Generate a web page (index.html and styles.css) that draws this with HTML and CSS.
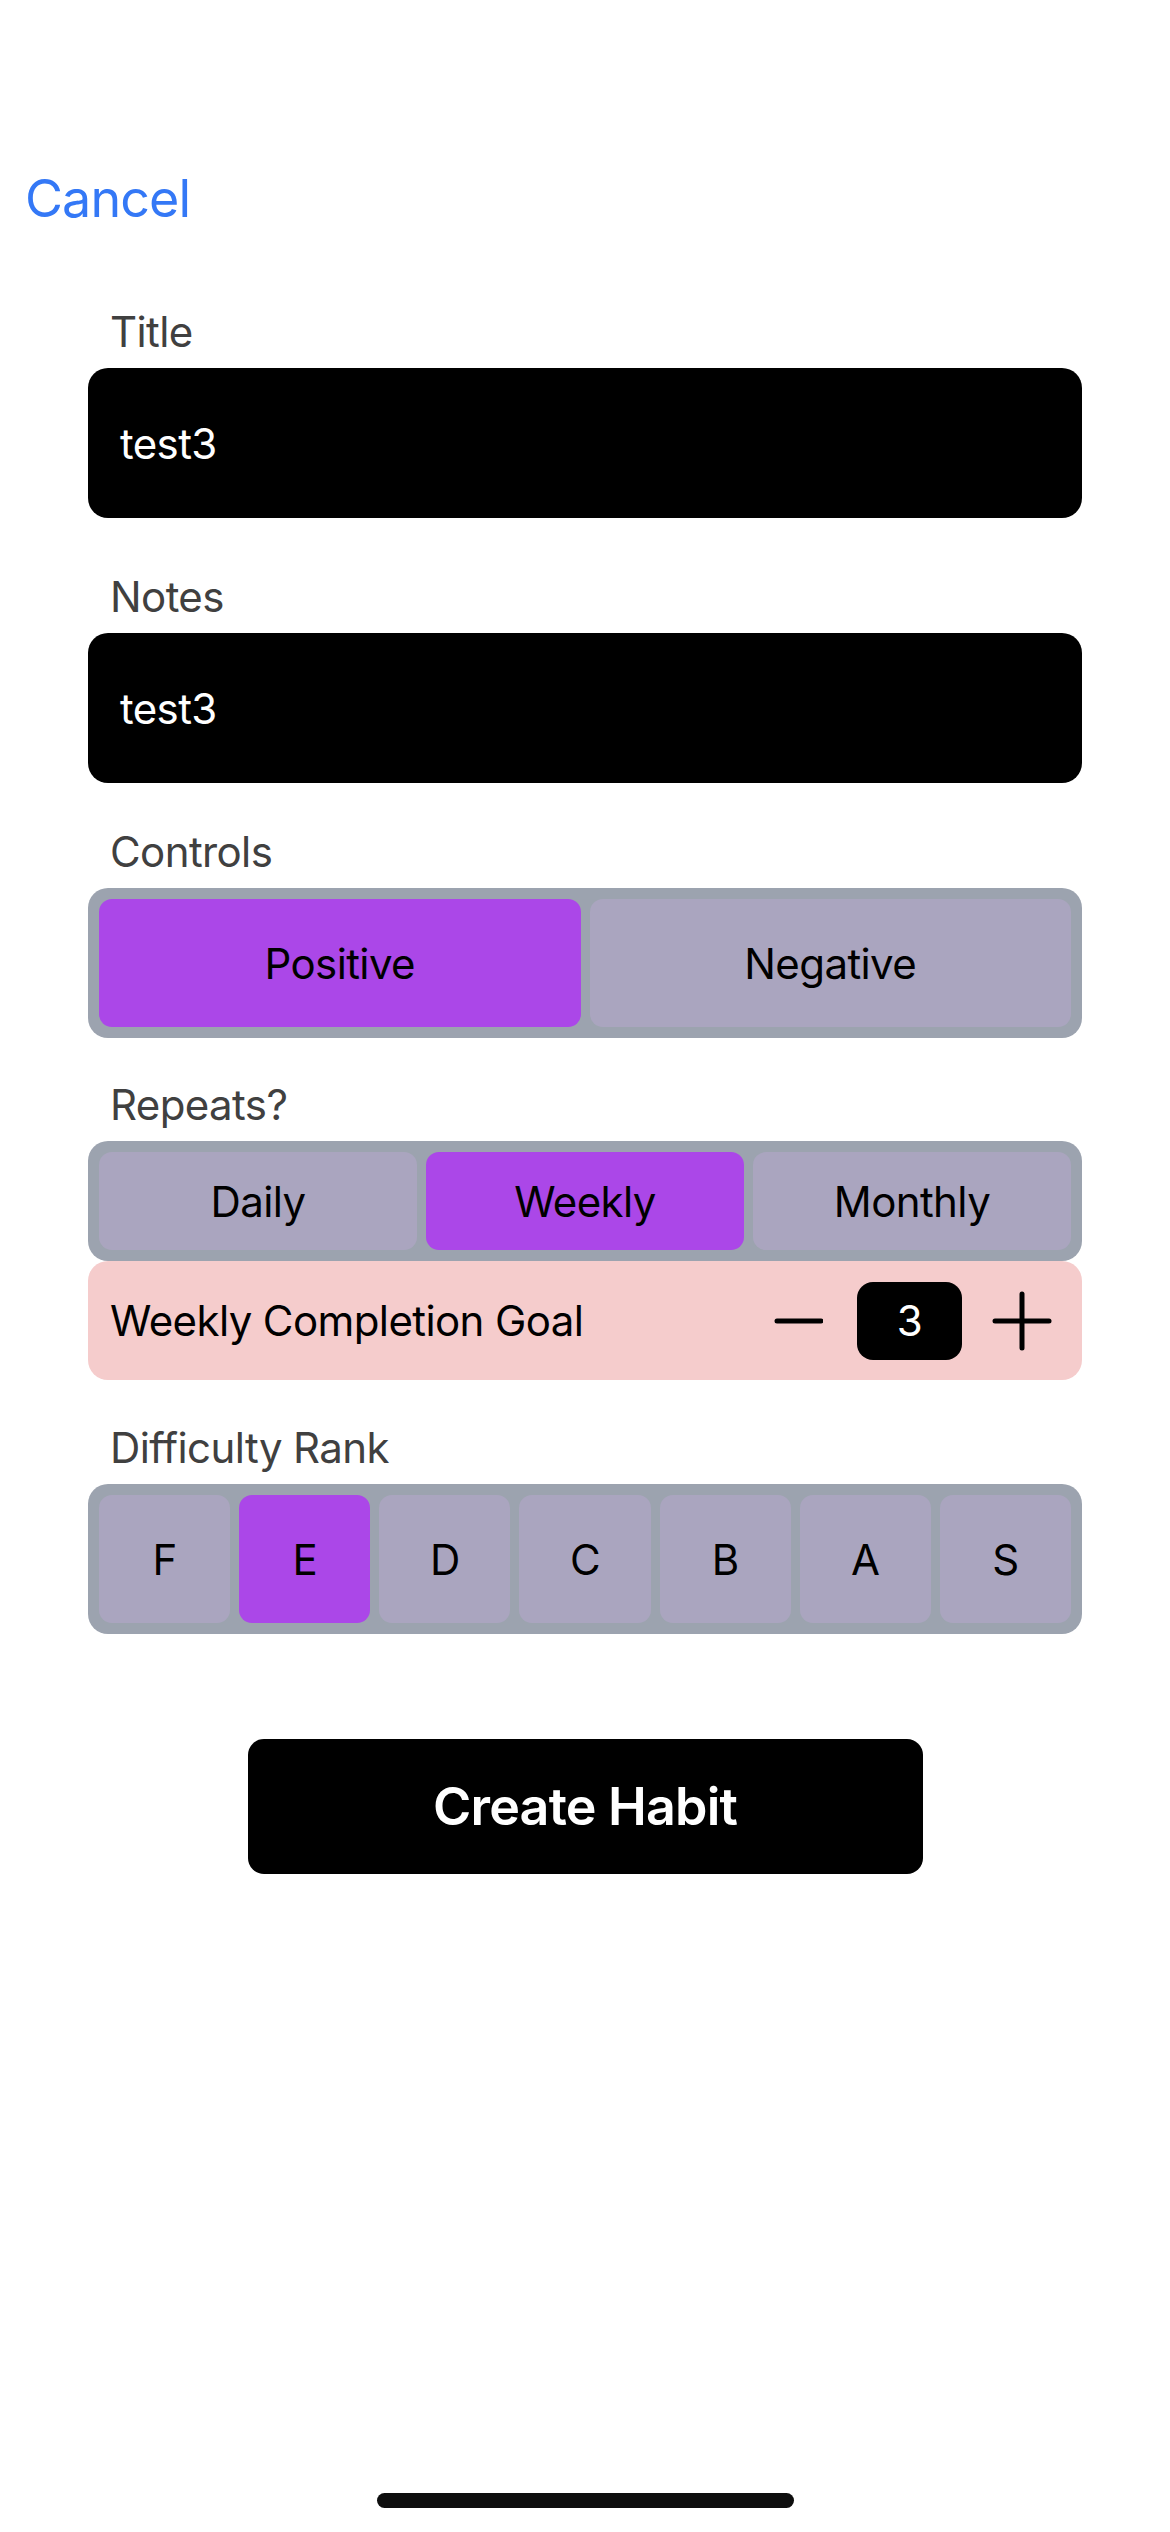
FILE: index.html
```html
<!DOCTYPE html>
<html>
<head>
<meta charset="utf-8">
<link rel="stylesheet" href="styles.css">
</head>
<body>
<div class="screen">
  <div class="nav"><span class="cancel">Cancel</span></div>
  <div class="form">
    <div class="section first">
      <div class="label">Title</div>
      <div class="field">test3</div>
    </div>
    <div class="section notes">
      <div class="label">Notes</div>
      <div class="field">test3</div>
    </div>
    <div class="section controls">
      <div class="label">Controls</div>
      <div class="seg tall">
        <div class="opt on">Positive</div>
        <div class="opt">Negative</div>
      </div>
    </div>
    <div class="section repeats">
      <div class="label">Repeats?</div>
      <div class="seg short">
        <div class="opt">Daily</div>
        <div class="opt on">Weekly</div>
        <div class="opt">Monthly</div>
      </div>
      <div class="goal">
        <span class="goal-text">Weekly Completion Goal</span>
        <div class="stepper">
          <svg class="minus" width="50" height="58" viewBox="0 0 50 58"><line x1="4" y1="29" x2="48" y2="29" stroke="#000" stroke-width="5" stroke-linecap="round"/></svg>
          <div class="count">3</div>
          <svg class="plus" width="60" height="60" viewBox="0 0 60 60"><line x1="3" y1="30" x2="57" y2="30" stroke="#000" stroke-width="5" stroke-linecap="round"/><line x1="30" y1="3" x2="30" y2="57" stroke="#000" stroke-width="5" stroke-linecap="round"/></svg>
        </div>
      </div>
    </div>
    <div class="section difficulty">
      <div class="label">Difficulty Rank</div>
      <div class="seg tall">
        <div class="opt">F</div>
        <div class="opt on">E</div>
        <div class="opt">D</div>
        <div class="opt">C</div>
        <div class="opt">B</div>
        <div class="opt">A</div>
        <div class="opt">S</div>
      </div>
    </div>
    <div class="actions">
      <div class="create">Create Habit</div>
    </div>
  </div>
  <div class="home-indicator"></div>
</div>
</body>
</html>
```
FILE: styles.css
```css
html, body {
  margin: 0;
  padding: 0;
  background: #ffffff;
}
body {
  font-family: Inter, "Noto Sans", "Liberation Sans", sans-serif;
  color: #000;
  letter-spacing: -0.6px;
}
.screen {
  position: relative;
  width: 1170px;
  height: 2532px;
  overflow: hidden;
  background: #fff;
}
.nav {
  padding: 168px 0 0 25px;
  height: 62px;
}
.cancel {
  font-size: 52px;
  line-height: 62px;
  color: #3478f6;
  display: block;
  letter-spacing: -0.9px;
}
.form {
  padding: 77px 88px 0 88px;
}
.label {
  font-size: 42px;
  line-height: 50px;
  color: #404040;
  padding-left: 22px;
  margin-bottom: 11px;
}
.section.notes { margin-top: 54px; }
.section.controls { margin-top: 44px; }
.section.repeats { margin-top: 42px; }
.section.difficulty { margin-top: 43px; }
.field {
  height: 150px;
  background: #000;
  border-radius: 20px;
  color: #fff;
  font-size: 42px;
  display: flex;
  align-items: center;
  padding-left: 32px;
  box-sizing: border-box;
}
.seg {
  display: flex;
  gap: 9px;
  padding: 11px;
  background: #9ca3af;
  border-radius: 20px;
  box-sizing: border-box;
}
.seg.tall { height: 150px; }
.seg.short { height: 120px; }
.opt {
  flex: 1;
  display: flex;
  align-items: center;
  justify-content: center;
  background: #aaa5bf;
  border-radius: 13px;
  font-size: 42px;
  color: #000;
}
.opt.on {
  background: #ab47e8;
}
.goal {
  height: 119px;
  background: #f5cccc;
  border-radius: 20px;
  display: flex;
  align-items: center;
  justify-content: space-between;
  padding: 0 30px 0 22px;
  box-sizing: border-box;
}
.goal-text {
  font-size: 42px;
}
.stepper {
  display: flex;
  align-items: center;
}
.minus { display: block; margin-right: 34px; }
.count {
  width: 105px;
  height: 78px;
  background: #000;
  border-radius: 16px;
  color: #fff;
  font-size: 42px;
  display: flex;
  align-items: center;
  justify-content: center;
}
.plus { display: block; margin-left: 30px; }
.actions {
  display: flex;
  justify-content: center;
  margin-top: 105px;
}
.create {
  width: 675px;
  height: 135px;
  background: #000;
  border-radius: 16px;
  color: #fff;
  font-size: 52px;
  font-weight: 600;
  letter-spacing: -0.8px;
  display: flex;
  align-items: center;
  justify-content: center;
}
.home-indicator {
  position: absolute;
  left: 377px;
  top: 2493px;
  width: 417px;
  height: 15px;
  border-radius: 8px;
  background: #0e0e0e;
}
```
